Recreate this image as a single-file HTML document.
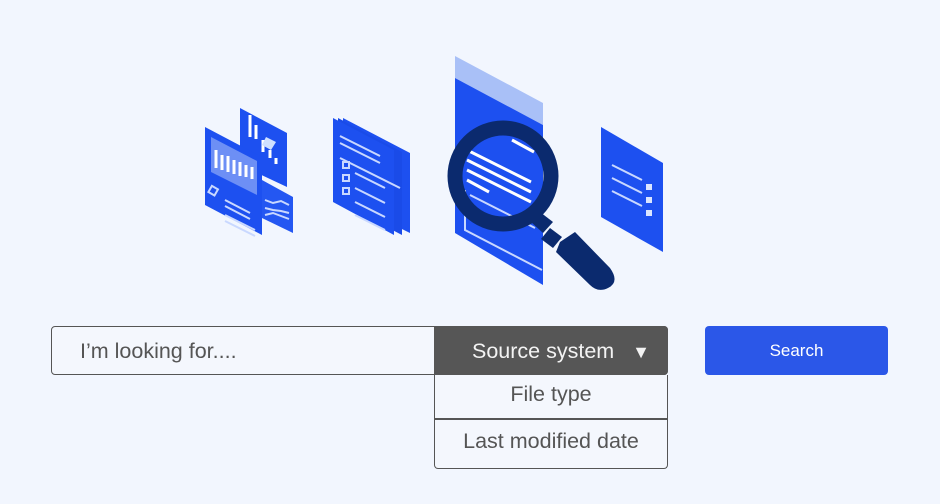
<!DOCTYPE html>
<html><head><meta charset="utf-8"><style>
body{margin:0;width:940px;height:504px;background:#f2f6fe;font-family:"Liberation Sans",sans-serif;position:relative;overflow:hidden}
.abs{position:absolute;box-sizing:border-box}
</style></head><body>
<svg class="abs" style="left:0;top:0" width="940" height="320" viewBox="0 0 940 320">
<g fill="#1d50f0">
 <polygon points="240,108 287,133 287,187 240,165"/>
 <polygon points="205,127 262,157 262,235 205,205"/>
 <polygon points="262,180 293,197 293,233 262,218" fill="#2457f2"/>
 <polygon points="343,118 410,153 410,233 343,200"/>
 <polygon points="338,118 402,152 402,235 338,202" fill="#1a4be8"/>
 <polygon points="333,118 394,150 394,235 333,202"/>
 <polygon points="455,56 543,103 543,125 455,78" fill="#a9c0f7"/>
 <polygon points="455,78 543,125 543,285 455,233"/>
 <polygon points="601,127 663,163 663,252 601,217"/>
</g>
<g stroke="#c9d8ff" stroke-width="2" fill="none">
 <polygon points="211,137 257,161 257,195 211,172" fill="#6d8ff5" stroke="none"/>
 <path d="M216,150v18M222,155v15M228,156v16M234,160v14M240,162v14M246,165v12M252,167v12" stroke="#fff" stroke-width="3"/>
 <path d="M250,115v22M256,125v14M263,140v12M270,150v8M276,158v6" stroke="#fff" stroke-width="3"/>
 <path d="M225,200l25,13M225,206l25,13M225,215l30,15M225,221l30,15"/>
 <path d="M265,200l8,3 8,-2 8,4M265,208l8,2 8,1 8,2M265,215l8,-2 8,3 8,3"/>
 <polygon points="266,137 276,142 271,150 262,145" fill="#cfe0ff" stroke="none"/>
 <rect x="210" y="187" width="7" height="7" transform="rotate(30 213 190)"/>
 <path d="M340,136l40,20M340,143l40,20M340,158l60,30M355,173l30,15M355,188l30,15M355,202l30,15M355,215l30,15"/>
 <rect x="343" y="162" width="6" height="6"/><rect x="343" y="175" width="6" height="6"/><rect x="343" y="188" width="6" height="6"/>
 <path d="M465,190v40l77,40M470,195l65,33"/>
 <path d="M612,165l30,15M612,178l30,15M612,191l30,15"/>
 <rect x="646" y="184" width="6" height="6" fill="#dbe5ff" stroke="none"/><rect x="646" y="197" width="6" height="6" fill="#dbe5ff" stroke="none"/><rect x="646" y="210" width="6" height="6" fill="#dbe5ff" stroke="none"/>
</g>
<g stroke="#fff" stroke-width="3">
 <path d="M512,140l22,12M467,150l64,32M467,160l64,32M467,170l64,32M467,180l22,12"/>
</g>
<g fill="#0b2a6e">
 <circle cx="503" cy="176" r="48" fill="none" stroke="#0b2a6e" stroke-width="15"/>
 <polygon points="540,212 553,222 543,233 531,222"/>
 <polygon points="550,228 562,237 553,248 541,239"/>
 <path d="M560,242 L575,232 L610,268 Q620,282 608,288 Q598,293 590,285 L556,252 Z"/>
</g>
</svg>
<div class="abs" style="left:51px;top:326px;width:617px;height:49px;border:1.5px solid #555;border-radius:4px;background:#f4f7fd"></div>
<div class="abs" style="left:80px;top:339px;font-size:21.5px;color:#555">I’m looking for....</div>
<div class="abs" style="left:434px;top:326px;width:234px;height:49px;background:#565656;border-radius:0 4px 4px 0;color:#f3f3f3;font-size:21.5px;padding:13px 0 0 38px">Source system <span style="font-size:18px;margin-left:12px">&#9660;</span></div>
<div class="abs" style="left:434px;top:375px;width:234px;height:94px;border:1.5px solid #555;border-top:none;border-radius:0 0 4px 4px;background:#f4f7fd"></div>
<div class="abs" style="left:434px;top:418px;width:234px;height:1.5px;background:#555"></div>
<div class="abs" style="left:434px;top:382px;width:234px;text-align:center;font-size:21.5px;color:#555">File type</div>
<div class="abs" style="left:434px;top:429px;width:234px;text-align:center;font-size:21.5px;color:#555">Last modified date</div>
<div class="abs" style="left:705px;top:326px;width:183px;height:49px;background:#2b57e8;border-radius:4px;color:#fff;font-size:17px;text-align:center;line-height:49px">Search</div>
</body></html>
